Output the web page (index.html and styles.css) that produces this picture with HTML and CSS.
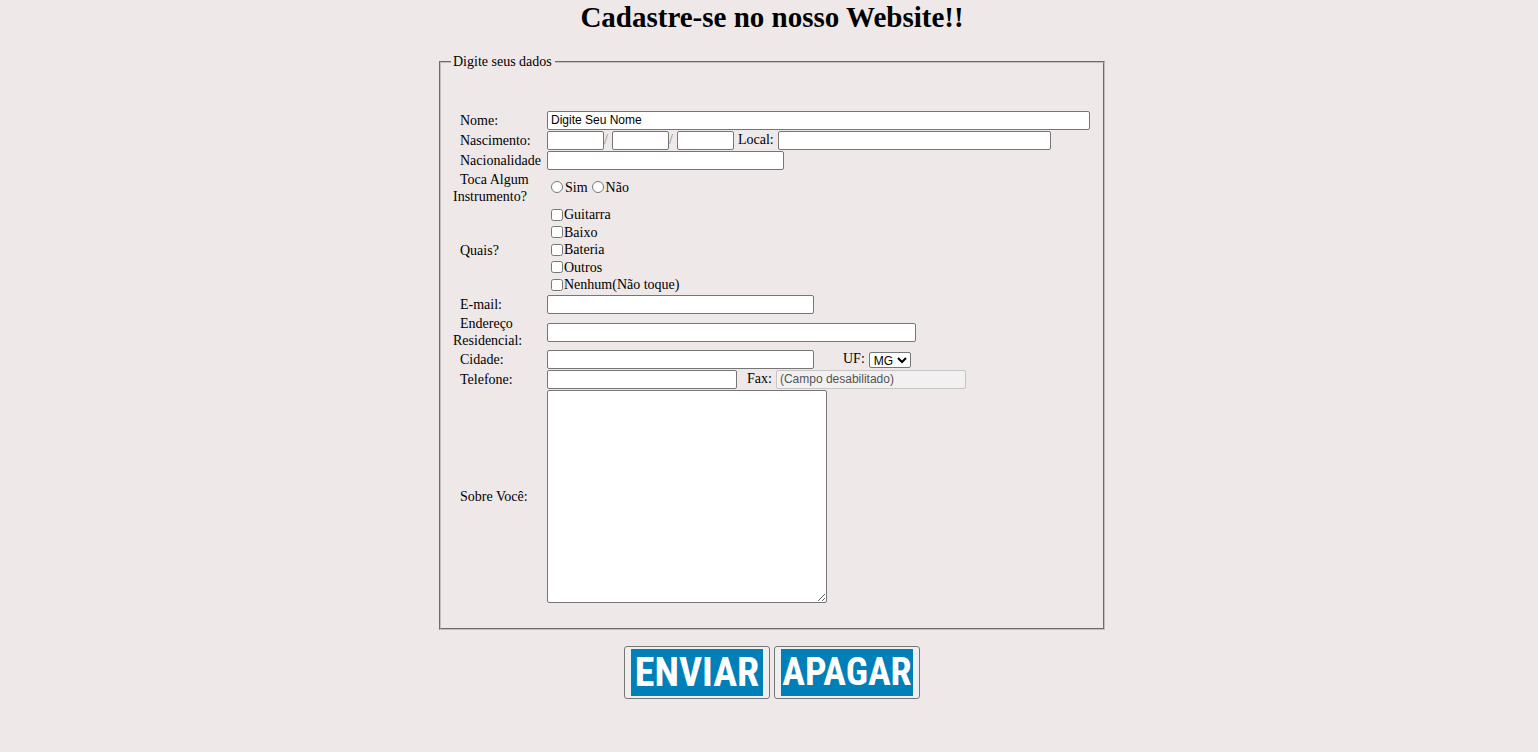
FILE: index.html
```html
<!DOCTYPE html>
<html lang="pt-BR">
<head>
<meta charset="utf-8">
<title>Cadastre-se</title>
<link rel="stylesheet" href="styles.css">
</head>
<body>
<main class="page">
  <h1 class="title">Cadastre-se no nosso Website!!</h1>
  <form class="signup">
    <fieldset class="box">
      <legend class="legend">Digite seus dados</legend>
      <div class="grid">
        <label class="name" for="nome">Nome:</label>
        <div class="cell"><input class="field full" id="nome" type="text" value="Digite Seu Nome"></div>

        <label class="name" for="dia">Nascimento:</label>
        <div class="cell">
          <span class="date">
            <input class="field w-date" id="dia" type="text"><span class="slash">/</span>
            <input class="field w-date" type="text" aria-label="Mês"><span class="slash">/</span>
            <input class="field w-date" type="text" aria-label="Ano">
          </span>
          <label class="side" for="local">Local:</label>
          <input class="field w-local" id="local" type="text">
        </div>

        <label class="name" for="nac">Nacionalidade</label>
        <div class="cell"><input class="field w-nation" id="nac" type="text"></div>

        <span class="name" id="toca">Toca Algum Instrumento?</span>
        <div class="cell radios" role="radiogroup" aria-labelledby="toca">
          <label class="choice"><input class="tick" type="radio" name="toca">Sim</label>
          <label class="choice"><input class="tick" type="radio" name="toca">Não</label>
        </div>

        <span class="name" id="quais">Quais?</span>
        <div class="cell checks" role="group" aria-labelledby="quais">
          <label class="choice"><input class="tick" type="checkbox">Guitarra</label>
          <label class="choice"><input class="tick" type="checkbox">Baixo</label>
          <label class="choice"><input class="tick" type="checkbox">Bateria</label>
          <label class="choice"><input class="tick" type="checkbox">Outros</label>
          <label class="choice"><input class="tick" type="checkbox">Nenhum(Não toque)</label>
        </div>

        <label class="name" for="email">E-mail:</label>
        <div class="cell"><input class="field w-mid" id="email" type="text"></div>

        <label class="name" for="end">Endereço Residencial:</label>
        <div class="cell"><input class="field w-address" id="end" type="text"></div>

        <label class="name" for="cidade">Cidade:</label>
        <div class="cell">
          <input class="field w-mid" id="cidade" type="text">
          <label class="side far" for="uf">UF:</label>
          <select class="select" id="uf"><option>MG</option></select>
        </div>

        <label class="name" for="tel">Telefone:</label>
        <div class="cell">
          <input class="field w-phone" id="tel" type="text">
          <label class="side near" for="fax">Fax:</label>
          <input class="field w-phone" id="fax" type="text" value="(Campo desabilitado)" disabled>
        </div>

        <label class="name" for="sobre">Sobre Você:</label>
        <div class="cell"><textarea class="field about" id="sobre"></textarea></div>
      </div>
    </fieldset>
    <div class="actions">
      <button class="btn" type="submit"><span class="plate">ENVIAR</span></button>
      <button class="btn" type="reset"><span class="plate clear">APAGAR</span></button>
    </div>
  </form>
</main>
</body>
</html>
```
FILE: styles.css
```css
* { box-sizing: border-box; }
body {
  margin: 0;
  background: #eee8e8;
  color: #000;
  font: 14px/17px "Liberation Serif", "Times New Roman", serif;
}
.page { padding-left: 6px; }
.title {
  margin: 0 0 19px;
  font-size: 29px;
  line-height: 34px;
  text-align: center;
}
.signup { max-width: 666px; margin: 0 auto; }
.box {
  margin: 0;
  min-width: 0;
  padding: 41px 13px 25px 12px;
  border: 2px groove #c0c0c0;
}
.legend { margin-left: -2px; padding: 0 3px 0 2px; }
.grid {
  display: grid;
  grid-template-columns: 94px 1fr;
  row-gap: 1px;
  align-items: center;
}
.name { text-indent: 7px; }
.cell { display: flex; align-items: center; }
.date { display: flex; }
.slash { width: 8px; color: #888; }
.field {
  height: 19px;
  margin: 0;
  padding: 0 3px 1px;
  border: 1px solid #767676;
  border-radius: 2px;
  background: #fff;
  color: #000;
  font: 12px "Liberation Sans", Arial, sans-serif;
}
.field:disabled {
  border-color: #c8c4c4;
  background: #f2f0f0;
  color: #545454;
}
.full { width: 100%; }
.w-date { width: 57px; }
.w-local { width: 273px; }
.w-nation { width: 237px; }
.w-mid { width: 267px; }
.w-address { width: 369px; }
.w-phone { width: 190px; }
.about { width: 280px; height: 213px; resize: both; }
.side { margin: 0 4px; padding-bottom: 2px; }
.far { margin-left: 29px; }
.near { margin-left: 10px; }
.select {
  width: 42px;
  height: 16px;
  padding: 0 0 1px;
  border: 1px solid #767676;
  border-radius: 2px;
  background: #fff;
  font: 12px/13px "Liberation Sans", Arial, sans-serif;
}
.radios { gap: 4px; padding: 0 0 2px 4px; }
.checks {
  flex-direction: column;
  align-items: flex-start;
  justify-content: space-between;
  padding: 0 0 1px 4px;
  height: 88px;
}
.choice { display: flex; align-items: center; gap: 2px; }
.checks .choice { gap: 1px; }
.tick { width: 12px; height: 12px; margin: 0; }
.actions {
  display: flex;
  justify-content: center;
  gap: 4px;
  margin-top: 16px;
}
.btn {
  padding: 2px 6px;
  border: 1px solid #767676;
  border-radius: 3px;
  background: #efefef;
}
.plate {
  display: block;
  width: 132px;
  height: 47px;
  background: #007fb8;
  color: #fff;
  font: bold 40px/47px "Liberation Sans Narrow", "Roboto Condensed", "Open Sans Condensed", "DejaVu Sans Condensed", sans-serif;
}
.clear { font-size: 38px; }
```
